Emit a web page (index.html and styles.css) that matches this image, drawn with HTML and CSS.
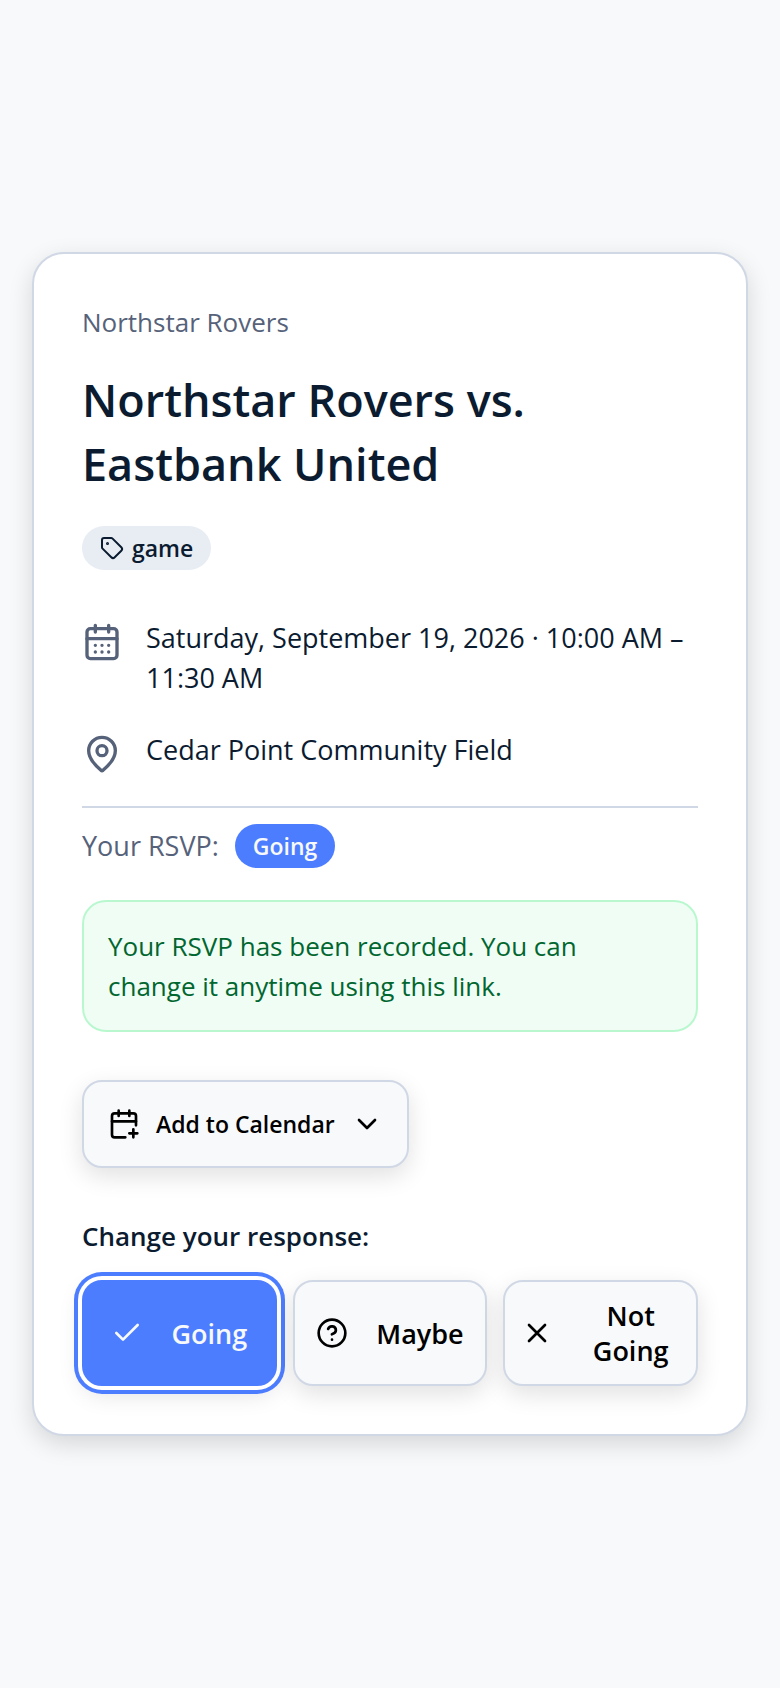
FILE: index.html
```html
<!DOCTYPE html>
<html lang="en">
	<head>
		<meta charset="UTF-8">
		<meta name="viewport" content="width=device-width, initial-scale=1">
		<title>Northstar Rovers vs. Eastbank United</title>
		<link rel="stylesheet" href="styles.css">
	</head>

	<body>
		<main class="card">
			<p class="team">Northstar Rovers</p>
			<h1 class="title">Northstar Rovers vs. Eastbank United</h1>
			<span class="badge">
				<svg class="icon icon-sm" viewBox="0 0 24 24" aria-hidden="true">
					<path d="M12.586 2.586A2 2 0 0 0 11.172 2H4a2 2 0 0 0-2 2v7.172a2 2 0 0 0 .586 1.414l8.704 8.704a2.426 2.426 0 0 0 3.42 0l6.58-6.58a2.426 2.426 0 0 0 0-3.42z"/>
					<circle cx="7.5" cy="7.5" r=".5" fill="currentColor"/>
				</svg>
				game
			</span>

			<div class="details">
				<div class="detail">
					<svg class="icon icon-lg" viewBox="0 0 24 24" aria-hidden="true">
						<path d="M8 2v4M16 2v4"/>
						<rect x="3" y="4" width="18" height="18" rx="2"/>
						<path d="M3 10h18M8 14h.01M12 14h.01M16 14h.01M8 18h.01M12 18h.01M16 18h.01"/>
					</svg>
					<p>Saturday, September 19, 2026 · 10:00 AM – 11:30 AM</p>
				</div>
				<div class="detail">
					<svg class="icon icon-lg" viewBox="0 0 24 24" aria-hidden="true">
						<path d="M20 10c0 4.993-5.539 10.193-7.399 11.799a1 1 0 0 1-1.202 0C9.539 20.193 4 14.993 4 10a8 8 0 0 1 16 0"/>
						<circle cx="12" cy="10" r="3"/>
					</svg>
					<p>Cedar Point Community Field</p>
				</div>
			</div>

			<div class="rsvp">
				<span class="rsvp-label">Your RSVP:</span>
				<span class="badge badge-primary">Going</span>
			</div>

			<div class="notice" role="status">Your RSVP has been recorded. You can change it anytime using this link.</div>

			<button type="button" class="btn btn-calendar" aria-haspopup="menu">
				<svg class="icon" viewBox="0 0 24 24" aria-hidden="true">
					<path d="M8 2v4M16 2v4M3 10h18M16 19h6M19 16v6"/>
					<path d="M21 13V6a2 2 0 0 0-2-2H5a2 2 0 0 0-2 2v14a2 2 0 0 0 2 2h8"/>
				</svg>
				Add to Calendar
				<svg class="icon" viewBox="0 0 24 24" aria-hidden="true">
					<path d="m6 9 6 6 6-6"/>
				</svg>
			</button>

			<h2 class="subtitle" id="response">Change your response:</h2>
			<div class="responses" role="group" aria-labelledby="response">
				<button type="button" class="btn active" aria-pressed="true">
					<svg class="icon" viewBox="0 0 24 24" aria-hidden="true">
						<path d="M20 6 9 17l-5-5"/>
					</svg>
					<span>Going</span>
				</button>
				<button type="button" class="btn" aria-pressed="false">
					<svg class="icon" viewBox="0 0 24 24" aria-hidden="true">
						<circle cx="12" cy="12" r="10"/>
						<path d="M9.09 9a3 3 0 0 1 5.83 1c0 2-3 3-3 3M12 17h.01"/>
					</svg>
					<span>Maybe</span>
				</button>
				<button type="button" class="btn" aria-pressed="false">
					<svg class="icon" viewBox="0 0 24 24" aria-hidden="true">
						<path d="M18 6 6 18M6 6l12 12"/>
					</svg>
					<span>Not Going</span>
				</button>
			</div>
		</main>
	</body>
</html>
```
FILE: styles.css
```css
* {
	box-sizing: border-box;
	margin: 0;
	padding: 0;
}

body {
	display: flex;
	align-items: center;
	justify-content: center;
	min-height: 100vh;
	padding: 32px;
	background: #f7f9fb;
	color: #0b1b30;
	font-family: "Open Sans", "Noto Sans", sans-serif;
	font-size: 26px;
	line-height: 40px;
}

.card {
	width: 100%;
	max-width: 896px;
	padding: 48px;
	background: #fff;
	border: 2px solid #d1d8e5;
	border-radius: 32px;
	box-shadow: 0 8px 24px rgba(0, 0, 0, 0.14);
}

.team {
	margin-bottom: 26px;
	color: #56627a;
}

.title {
	margin-bottom: 30px;
	font-size: 45px;
	font-weight: 600;
	line-height: 64px;
}

/* icons */
.icon {
	flex: none;
	width: 32px;
	height: 32px;
	fill: none;
	stroke: currentColor;
	stroke-width: 2;
	stroke-linecap: round;
	stroke-linejoin: round;
}

.icon-sm {
	width: 24px;
	height: 24px;
}

.icon-lg {
	width: 40px;
	height: 40px;
	margin-top: 4px;
	color: #56627a;
}

.badge {
	display: flex;
	align-items: center;
	gap: 8px;
	width: fit-content;
	height: 44px;
	padding: 0 18px;
	background: #e8edf4;
	border-radius: 22px;
	font-size: 23px;
	font-weight: 600;
}

.badge-primary {
	background: #4d7dff;
	color: #f7f9fb;
}

.details {
	display: flex;
	flex-direction: column;
	gap: 32px;
	margin-top: 48px;
	padding-bottom: 32px;
	border-bottom: 2px solid #d1d8e5;
	font-size: 27px;
}

.detail {
	display: flex;
	gap: 24px;
}

.rsvp {
	display: flex;
	align-items: center;
	gap: 16px;
	margin: 16px 0 32px;
}

.rsvp-label {
	color: #56627a;
	font-size: 27px;
}

.notice {
	padding: 24px 48px 24px 24px;
	background: #f0fdf4;
	border: 2px solid #b9f8cf;
	border-radius: 24px;
	color: #016630;
}

/* buttons */
.btn {
	display: flex;
	align-items: center;
	justify-content: center;
	gap: 28px;
	padding: 16px;
	background: #f7f9fb;
	border: 2px solid #d1d8e5;
	border-radius: 20px;
	box-shadow: 0 8px 24px rgba(0, 0, 0, 0.12);
	color: #000;
	font-family: inherit;
	font-size: 27px;
	font-weight: 600;
	line-height: 35px;
	cursor: pointer;
}

.btn-calendar {
	gap: 16px;
	height: 88px;
	margin: 48px 0;
	padding: 0 24px;
	font-size: 23px;
}

.subtitle {
	margin-bottom: 24px;
	font-size: 26px;
	font-weight: 600;
}

.responses {
	display: grid;
	grid-template-columns: repeat(3, 1fr);
	gap: 16px;
}

.active {
	background: #4d7dff;
	border-color: #4d7dff;
	color: #f7f9fb;
	box-shadow: 0 0 0 4px #fff, 0 0 0 8px #4d7dff, 0 8px 24px rgba(0, 0, 0, 0.12);
}
```
